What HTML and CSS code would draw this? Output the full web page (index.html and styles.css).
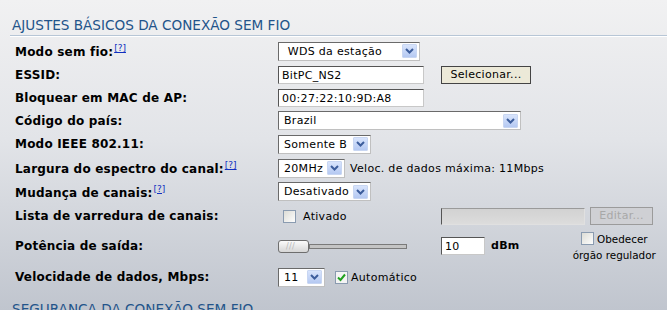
FILE: index.html
```html
<!DOCTYPE html>
<html lang="pt">
<head>
    <meta charset="UTF-8">
    <title>Ajustes básicos da conexão sem fio</title>
    <link rel="stylesheet" href="styles.css">
</head>
<body>
    <div class="page">
        <h2 class="section-title">AJUSTES BÁSICOS DA CONEXÃO SEM FIO</h2>

        <div class="row r24 first">
            <div class="label">Modo sem fio:<a class="help" href="#">[?]</a></div>
            <div class="col-a">
                <div class="select w142"><span class="value">&nbsp;WDS da estação</span><span class="arrow"><svg width="9" height="6" viewBox="0 0 9 6"><path d="M1 1 L4.5 4.5 L8 1" fill="none" stroke="#3c5d9c" stroke-width="2"/></svg></span></div>
            </div>
        </div>

        <div class="row r23">
            <div class="label">ESSID:</div>
            <div class="col-a"><div class="input w146">BitPC_NS2</div></div>
            <div class="col-b"><div class="button">Selecionar...</div></div>
        </div>

        <div class="row r23">
            <div class="label">Bloquear em MAC de AP:</div>
            <div class="col-a"><div class="input w146">00:27:22:10:9D:A8</div></div>
        </div>

        <div class="row r23">
            <div class="label">Código do país:</div>
            <div class="col-wide">
                <div class="select w243"><span class="value">Brazil</span><span class="arrow"><svg width="9" height="6" viewBox="0 0 9 6"><path d="M1 1 L4.5 4.5 L8 1" fill="none" stroke="#3c5d9c" stroke-width="2"/></svg></span></div>
            </div>
        </div>

        <div class="row r24">
            <div class="label">Modo IEEE 802.11:</div>
            <div class="col-a">
                <div class="select w93"><span class="value">Somente B</span><span class="arrow"><svg width="9" height="6" viewBox="0 0 9 6"><path d="M1 1 L4.5 4.5 L8 1" fill="none" stroke="#3c5d9c" stroke-width="2"/></svg></span></div>
            </div>
        </div>

        <div class="row r24">
            <div class="label">Largura do espectro do canal:<a class="help" href="#">[?]</a></div>
            <div class="col-wide">
                <div class="select w67"><span class="value">20MHz</span><span class="arrow"><svg width="9" height="6" viewBox="0 0 9 6"><path d="M1 1 L4.5 4.5 L8 1" fill="none" stroke="#3c5d9c" stroke-width="2"/></svg></span></div>
                <span class="note">Veloc. de dados máxima: 11Mbps</span>
            </div>
        </div>

        <div class="row r23">
            <div class="label">Mudança de canais:<a class="help" href="#">[?]</a></div>
            <div class="col-a">
                <div class="select w93"><span class="value">Desativado</span><span class="arrow"><svg width="9" height="6" viewBox="0 0 9 6"><path d="M1 1 L4.5 4.5 L8 1" fill="none" stroke="#3c5d9c" stroke-width="2"/></svg></span></div>
            </div>
        </div>

        <div class="row r26">
            <div class="label">Lista de varredura de canais:</div>
            <div class="col-a">
                <span class="check offset"></span><span class="check-text">Ativado</span>
            </div>
            <div class="col-b">
                <div class="input disabled w144"></div>
                <div class="button off">Editar...</div>
            </div>
        </div>

        <div class="row r34">
            <div class="label">Potência de saída:</div>
            <div class="col-a">
                <div class="slider">
                    <span class="handle">///</span>
                    <span class="track"></span>
                </div>
            </div>
            <div class="col-b">
                <div class="input w44">10</div>
                <span class="unit">dBm</span>
                <div class="regulator">
                    <div><span class="check"></span> Obedecer</div>
                    <div>órgão regulador</div>
                </div>
            </div>
        </div>

        <div class="row r28">
            <div class="label">Velocidade de dados, Mbps:</div>
            <div class="col-wide">
                <div class="select w47"><span class="value">11</span><span class="arrow"><svg width="9" height="6" viewBox="0 0 9 6"><path d="M1 1 L4.5 4.5 L8 1" fill="none" stroke="#3c5d9c" stroke-width="2"/></svg></span></div>
                <span class="check checked"><svg width="9" height="9" viewBox="0 0 9 9"><path d="M1 4.5 L3.5 7 L8 1.5" fill="none" stroke="#21a121" stroke-width="2"/></svg></span><span class="check-text tight">Automático</span>
            </div>
        </div>

        <h2 class="section-title second">SEGURANÇA DA CONEXÃO SEM FIO</h2>
    </div>
</body>
</html>
```

FILE: styles.css
```css
html, body {
    margin: 0;
    padding: 0;
    height: 100%;
}

body {
    font-family: "DejaVu Sans", Verdana, sans-serif;
    font-size: 11px;
    letter-spacing: 0.3px;
    color: #000;
    background: linear-gradient(to bottom, #f1f1f2 0%, #e2e4e8 45%, #c0c5ce 100%);
    overflow: hidden;
}

.section-title {
    margin: 0 0 0 10px;
    padding: 17px 0 2px 2px;
    font-size: 13.6px;
    font-weight: normal;
    letter-spacing: 0;
    color: #23548a;
    border-bottom: 1px solid #b7c6d6;
    box-shadow: 0 1px 0 #fff;
}

.section-title.second {
    margin-top: 10px;
    padding-top: 0;
    border: none;
    box-shadow: none;
}

.row {
    display: grid;
    grid-template-columns: 263px 163px auto;
    align-items: center;
    padding-left: 15px;
}

.row.first {
    margin-top: 3px;
}

.r23 { height: 23px; }
.r24 { height: 24px; }
.r26 { height: 26px; }
.r28 { height: 28px; }
.r34 { height: 34px; }

.label {
    font-size: 12px;
    font-weight: bold;
    letter-spacing: 0.2px;
}

.help {
    font-size: 9px;
    font-weight: normal;
    letter-spacing: 0;
    color: #1030c0;
    vertical-align: 5px;
    margin-left: 1px;
}

.col-a, .col-b, .col-wide {
    display: flex;
    align-items: center;
}

.col-wide {
    grid-column: 2 / 4;
}

.select {
    box-sizing: border-box;
    height: 19px;
    display: flex;
    align-items: center;
    justify-content: space-between;
    background: #fff;
    border: 1px solid #c0c0c0;
    border-top-color: #6a6a6a;
    border-left-color: #6a6a6a;
    padding: 0 2px 0 5px;
}

.select .value {
    white-space: nowrap;
}

.arrow {
    width: 15px;
    height: 14px;
    display: flex;
    align-items: center;
    justify-content: center;
    background: linear-gradient(to bottom, #d8e4fc, #b5c9f2);
    border: 1px solid #c8d6f2;
    box-sizing: border-box;
    border-radius: 1px;
}

.input {
    box-sizing: border-box;
    height: 18px;
    line-height: 16px;
    padding: 1px 3px 0;
    background: #fff;
    border: 1px solid #c8c8c8;
    border-top-color: #555;
    border-left-color: #555;
}

.input.disabled {
    background: linear-gradient(to bottom, #d2d2d2, #dcdcdc);
    border-color: #9a9a9a #e0e0e0 #e0e0e0 #555;
    height: 17px;
}

.w47 { width: 47px; }
.w67 { width: 67px; }
.w93 { width: 93px; }
.w142 { width: 142px; }
.w144 { width: 144px; }
.w146 { width: 146px; }
.w243 { width: 243px; }
.w44 { width: 44px; }

.button {
    box-sizing: border-box;
    height: 18px;
    line-height: 16px;
    padding: 0 4px;
    background: #ece9d8;
    border: 1px solid #444;
    text-align: center;
    width: 90px;
}

.button.off {
    width: 63px;
    margin-left: 5px;
    background: #cfd0d4;
    border-color: #9b9b9b;
    color: #a8a8a8;
}

.note {
    margin-left: 5px;
}

.check {
    box-sizing: border-box;
    width: 13px;
    height: 13px;
    display: inline-flex;
    align-items: center;
    justify-content: center;
    border: 1px solid #8a9bb0;
    background: linear-gradient(135deg, #dcdcd6, #fdfdfd);
    vertical-align: -2px;
}

.check.offset {
    margin-left: 5px;
}

.check.checked {
    margin-left: 10px;
    background: #f4f4f4;
}

.check-text {
    margin-left: 7px;
}

.check-text.tight {
    margin-left: 3px;
}

.slider {
    display: flex;
    align-items: center;
    width: 129px;
}

.handle {
    box-sizing: border-box;
    width: 31px;
    height: 13px;
    border: 1px solid #6e6e6e;
    border-radius: 3px;
    background: linear-gradient(to bottom, #fbfbfb, #d6d6d6);
    font-size: 8px;
    line-height: 11px;
    color: #b8b8b8;
    padding-left: 7px;
}

.track {
    flex: 1;
    height: 5px;
    box-sizing: border-box;
    border: 1px solid #7a7a7a;
    background: #c4c4c4;
}

.unit {
    font-weight: bold;
    margin-left: 6px;
    margin-top: -2px;
}

.regulator {
    margin-left: 53px;
    text-align: center;
    font-size: 10.4px;
    letter-spacing: 0;
    line-height: 16px;
    margin-top: 1px;
}
```
